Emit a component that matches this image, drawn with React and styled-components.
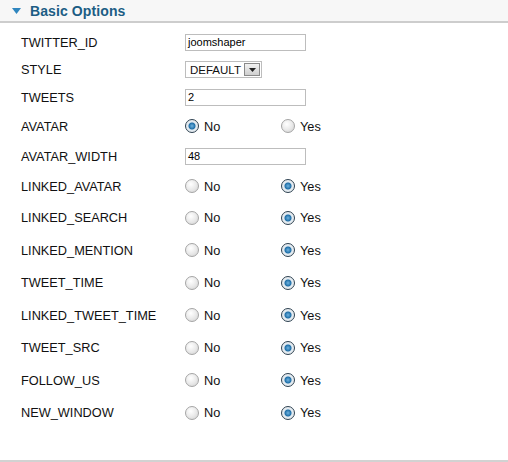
import React from "react";
import styled, { createGlobalStyle } from "styled-components";

const GlobalStyle = createGlobalStyle`
    html, body {
        margin: 0;
        padding: 0;
        background: #fff;
    }
    body {
        font-family: "Liberation Sans", Arial, sans-serif;
        font-size: 12.75px;
        color: #111;
    }
`;

const Panel = styled.div`
    width: 508px;
    height: 462px;
    box-sizing: border-box;
    border-bottom: 2px solid #d2d2d2;
    display: flex;
    flex-direction: column;
`;

const Header = styled.div`
    height: 21px;
    background: #f7f7f7;
    border-bottom: 2px solid #cdcdcd;
    display: flex;
    align-items: center;
    padding-left: 12px;
    gap: 9px;

    .title {
        font-size: 14px;
        font-weight: bold;
        color: #1c5d84;
        letter-spacing: 0.1px;
    }
`;

const Body = styled.div`
    padding: 5px 0 0 21px;
`;

const Row = styled.div`
    display: grid;
    grid-template-columns: 164px 96px auto;
    align-items: center;
    height: ${(p) => p.$h}px;
`;

const Label = styled.div`
    font-size: 12.75px;
    color: #111;
`;

const TextInput = styled.div`
    grid-column: 2 / 4;
    width: 117px;
    height: 15px;
    border: 1px solid #bdbdbd;
    font-size: 11px;
    line-height: 15px;
    padding-left: 2px;
    color: #000;
`;

const Select = styled.div`
    grid-column: 2 / 4;
    width: 71px;
    height: 15px;
    border: 1px solid #bdbdbd;
    display: flex;
    align-items: center;
    justify-content: space-between;
    padding-left: 4px;
    font-size: 11.5px;

    .btn {
        width: 16px;
        height: 13px;
        margin-right: 1px;
        border: 1px solid #8a8a8a;
        box-sizing: border-box;
        background: linear-gradient(#f2f2f2, #cfcfcf);
        display: flex;
        align-items: center;
        justify-content: center;
    }
`;

const Option = styled.div`
    display: flex;
    align-items: center;
    gap: 5px;
    font-size: 12.75px;
`;

const Radio = styled.span`
    width: 12px;
    height: 12px;
    border-radius: 50%;
    border: 1px solid ${(p) => (p.$on ? "#2d4150" : "#a5a5a5")};
    background: ${(p) =>
        p.$on
            ? "radial-gradient(circle at 50% 50%, #6fb3e0 0, #1f6fa8 3px, #dfe8ef 4px, #f4f4f4 100%)"
            : "radial-gradient(circle at 40% 35%, #fff 0, #eaeaea 50%, #cfcfcf 100%)"};
    display: inline-block;
`;

const options = [
    { label: "TWITTER_ID", type: "text", value: "joomshaper", h: 28 },
    { label: "STYLE", type: "select", value: "DEFAULT", h: 27 },
    { label: "TWEETS", type: "text", value: "2", h: 28 },
    { label: "AVATAR", type: "radio", value: "no", h: 30 },
    { label: "AVATAR_WIDTH", type: "text", value: "48", h: 30 },
    { label: "LINKED_AVATAR", type: "radio", value: "yes", h: 30.5 },
    { label: "LINKED_SEARCH", type: "radio", value: "yes", h: 32.5 },
    { label: "LINKED_MENTION", type: "radio", value: "yes", h: 32.5 },
    { label: "TWEET_TIME", type: "radio", value: "yes", h: 32.5 },
    { label: "LINKED_TWEET_TIME", type: "radio", value: "yes", h: 32.5 },
    { label: "TWEET_SRC", type: "radio", value: "yes", h: 32.5 },
    { label: "FOLLOW_US", type: "radio", value: "yes", h: 32.5 },
    { label: "NEW_WINDOW", type: "radio", value: "yes", h: 32.5 },
];

const Control = ({ type, value }) => {
    if (type === "text") return <TextInput>{value}</TextInput>;
    if (type === "select")
        return (
            <Select>
                <span>{value}</span>
                <span className="btn">
                    <svg width="7" height="4" viewBox="0 0 7 4">
                        <path d="M0 0 H7 L3.5 4 Z" fill="#222" />
                    </svg>
                </span>
            </Select>
        );
    return (
        <>
            <Option>
                <Radio $on={value === "no"} />
                No
            </Option>
            <Option>
                <Radio $on={value === "yes"} />
                Yes
            </Option>
        </>
    );
};

const App = () => (
    <>
        <GlobalStyle />
        <Panel>
            <Header>
                <svg width="9" height="6" viewBox="0 0 9 6">
                    <path d="M0 0 H9 L4.5 6 Z" fill="#2f86bf" />
                </svg>
                <span className="title">Basic Options</span>
            </Header>
            <Body>
                {options.map((o) => (
                    <Row key={o.label} $h={o.h}>
                        <Label>{o.label}</Label>
                        <Control type={o.type} value={o.value} />
                    </Row>
                ))}
            </Body>
        </Panel>
    </>
);

export default App;
